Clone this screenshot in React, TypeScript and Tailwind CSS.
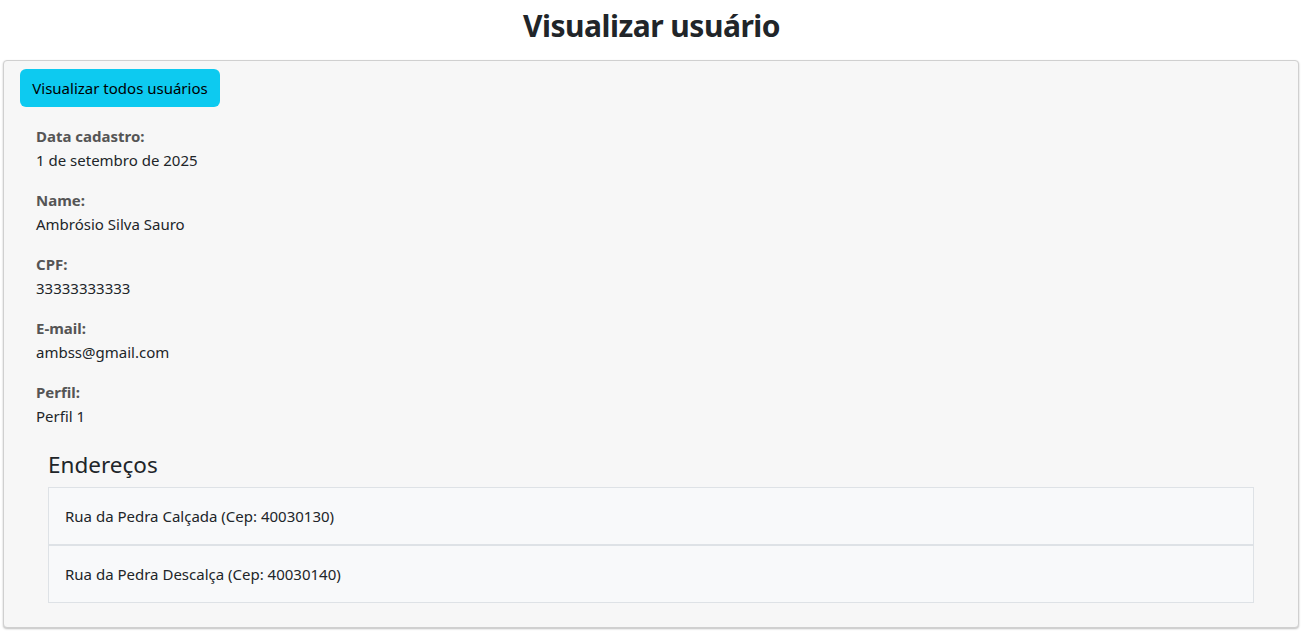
import React from "react";

const fields = [
  { label: "Data cadastro:", value: "1 de setembro de 2025" },
  { label: "Name:", value: "Ambrósio Silva Sauro" },
  { label: "CPF:", value: "33333333333" },
  { label: "E-mail:", value: "ambss@gmail.com" },
  { label: "Perfil:", value: "Perfil 1" },
];

const addresses = [
  "Rua da Pedra Calçada (Cep: 40030130)",
  "Rua da Pedra Descalça (Cep: 40030140)",
];

export default function App() {
  return (
    <div
      className="min-h-[632px] bg-white text-[#212529]"
      style={{ fontFamily: '"Noto Sans", "Open Sans", sans-serif' }}
    >
      <h1 className="pt-[7px] h-[45px] text-center text-[30px] leading-[38px] font-bold tracking-[-0.5px] text-[#212529]">
        Visualizar usuário
      </h1>
      <div className="mt-[15px] ml-[3px] mr-[4px] h-[568px] rounded-[4px] border border-[#d0d0d0] bg-[#f7f7f7] shadow-[0_1px_2px_rgba(0,0,0,0.25)] px-4 pt-2">
        <button className="h-[38px] w-[200px] rounded-[6px] bg-[#0dcaf0] text-[15px] leading-6 text-black">
          Visualizar todos usuários
        </button>
        <div className="mt-[17px] px-4">
          {fields.map((f) => (
            <div key={f.label} className="mb-4">
              <div className="text-[15px] leading-6 font-bold text-[#555555]">{f.label}</div>
              <div className="text-[15px] leading-6 text-[#212529]">{f.value}</div>
            </div>
          ))}
          <div className="mx-3 mt-[22px]">
            <h4 className="mb-2 text-[22.5px] leading-[29px] font-normal text-[#212529]">Endereços</h4>
            <div className="flex flex-col">
              {addresses.map((a) => (
                <div
                  key={a}
                  className="border border-[#dee2e6] bg-[#f8f9fa] px-4 py-4 text-[15px] leading-6 text-[#212529]"
                >
                  {a}
                </div>
              ))}
            </div>
          </div>
        </div>
      </div>
    </div>
  );
}
